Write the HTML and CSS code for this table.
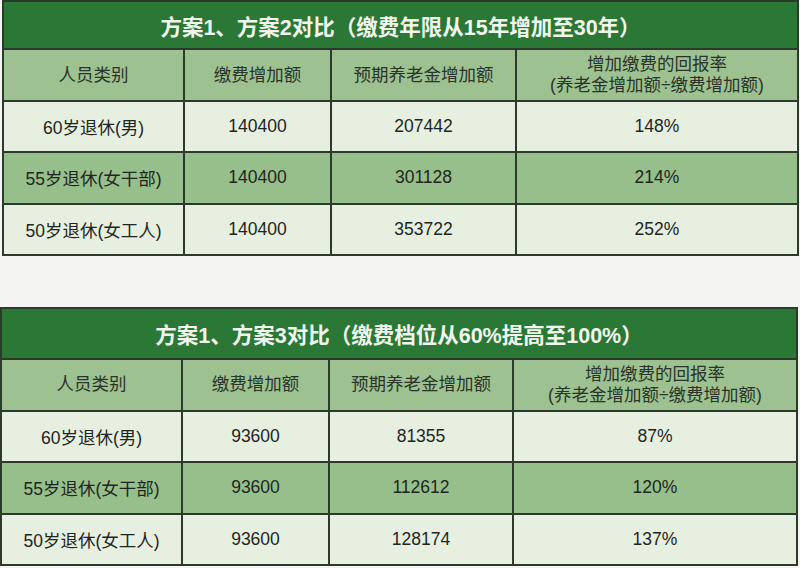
FILE: index.html
```html
<!DOCTYPE html>
<html lang="zh-CN">
<head>
<meta charset="utf-8">
<link rel="stylesheet" href="styles.css">
</head>
<body>
<div class="page">
  <table class="cmp cmp-a">
    <colgroup><col class="c1"><col class="c2"><col class="c3"><col class="c4"></colgroup>
    <tr class="title"><th colspan="4">方案1、方案2对比（缴费年限从15年增加至30年）</th></tr>
    <tr class="head"><td>人员类别</td><td>缴费增加额</td><td>预期养老金增加额</td><td>增加缴费的回报率<br>(养老金增加额÷缴费增加额)</td></tr>
    <tr class="row"><td>60岁退休(男)</td><td>140400</td><td>207442</td><td>148%</td></tr>
    <tr class="row hl"><td>55岁退休(女干部)</td><td>140400</td><td>301128</td><td>214%</td></tr>
    <tr class="row"><td>50岁退休(女工人)</td><td>140400</td><td>353722</td><td>252%</td></tr>
  </table>
  <table class="cmp cmp-b">
    <colgroup><col class="c1"><col class="c2"><col class="c3"><col class="c4"></colgroup>
    <tr class="title"><th colspan="4">方案1、方案3对比（缴费档位从60%提高至100%）</th></tr>
    <tr class="head"><td>人员类别</td><td>缴费增加额</td><td>预期养老金增加额</td><td>增加缴费的回报率<br>(养老金增加额÷缴费增加额)</td></tr>
    <tr class="row"><td>60岁退休(男)</td><td>93600</td><td>81355</td><td>87%</td></tr>
    <tr class="row hl"><td>55岁退休(女干部)</td><td>93600</td><td>112612</td><td>120%</td></tr>
    <tr class="row"><td>50岁退休(女工人)</td><td>93600</td><td>128174</td><td>137%</td></tr>
  </table>
</div>
</body>
</html>
```

FILE: styles.css
```css
html, body {
  margin: 0;
  padding: 0;
  background: #f4f5f2;
}
.page {
  width: 800px;
  height: 568px;
  overflow: hidden;
  display: flex;
  flex-direction: column;
  gap: 51px;
}
.cmp {
  border-collapse: collapse;
  table-layout: fixed;
  font-family: "Liberation Sans", "Noto Sans CJK SC", sans-serif;
  color: #1f261f;
  flex: none;
}
.cmp-a { width: 797px; margin-left: 2px; }
.cmp-b { width: 798px; margin-left: 0; }
.cmp-a .c1 { width: 181px; }
.cmp-a .c2 { width: 147px; }
.cmp-a .c3 { width: 185px; }
.cmp-b .c1 { width: 181px; }
.cmp-b .c2 { width: 147px; }
.cmp-b .c3 { width: 184px; }
.cmp th, .cmp td {
  border: 2px solid #2c3a2c;
  text-align: center;
  vertical-align: middle;
  padding: 0;
}
.title th {
  background: #2b7836;
  color: #f1f6ec;
  font-size: 21.5px;
  font-weight: bold;
  height: 46px;
}
.cmp-b .title th { height: 49px; }
.head td {
  background: #9dc190;
  font-size: 17.5px;
  line-height: 21px;
  height: 50px;
  color: #2a342a;
}
.row td {
  background: #e6efe0;
  font-size: 17.5px;
  height: 49.33px;
}
.row.hl td {
  background: #97bf8b;
}
```
